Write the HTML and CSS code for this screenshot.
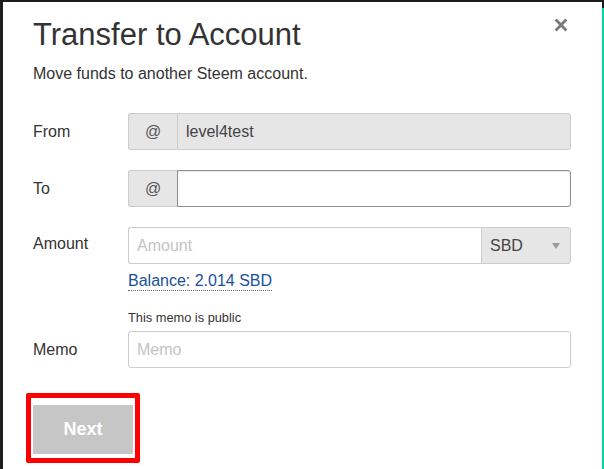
FILE: index.html
```html
<!DOCTYPE html>
<html lang="en">
<head>
<meta charset="utf-8">
<title>Transfer to Account</title>
<link rel="stylesheet" href="styles.css">
</head>
<body>
<div class="frame">
  <div class="modal">
    <button class="close" type="button" aria-label="Close">
      <svg width="14" height="14" viewBox="0 0 14 14"><path d="M1.6 1.6 L12.4 12.4 M12.4 1.6 L1.6 12.4" stroke="#7a7a7a" stroke-width="2.8" fill="none"/></svg>
    </button>
    <h1 class="title">Transfer to Account</h1>
    <p class="subtitle">Move funds to another Steem account.</p>
    <form class="form">
      <div class="row">
        <span class="label">From</span>
        <div class="field">
          <div class="group">
            <span class="addon">@</span>
            <input class="input input-disabled" value="level4test" disabled>
          </div>
        </div>
      </div>
      <div class="row">
        <span class="label">To</span>
        <div class="field">
          <div class="group">
            <span class="addon">@</span>
            <input class="input input-focus" value="">
          </div>
        </div>
      </div>
      <div class="row">
        <span class="label label-amount">Amount</span>
        <div class="field">
          <div class="group">
            <input class="input input-amount" placeholder="Amount">
            <div class="select">
              <span>SBD</span>
              <svg width="8" height="6" viewBox="0 0 8 6"><path d="M0 0 H8 L4 6 Z" fill="#999"/></svg>
            </div>
          </div>
          <a class="balance" href="#">Balance: 2.014 SBD</a>
        </div>
      </div>
      <div class="row row-memo">
        <span class="label label-memo">Memo</span>
        <div class="field">
          <span class="note">This memo is public</span>
          <input class="input input-memo" placeholder="Memo">
        </div>
      </div>
      <div class="actions">
        <div class="btn-wrap">
          <button class="btn" type="button">Next</button>
          <span class="highlight"></span>
        </div>
      </div>
    </form>
  </div>
  <div class="edge"></div>
</div>
</body>
</html>
```
FILE: styles.css
```css
html, body {
  margin: 0;
  height: 100%;
}
body {
  background: #1d1d1d;
  font-family: "Liberation Sans", Arial, sans-serif;
  color: #333;
  overflow: hidden;
}
.frame {
  display: flex;
  height: 469px;
  padding: 2px 0 0 3px;
  box-sizing: border-box;
}
.modal {
  position: relative;
  flex: 0 0 599px;
  background: #fff;
  padding: 16px 0 0 30px;
  box-sizing: border-box;
}
.edge {
  flex: 0 0 2px;
  margin-top: 6px;
  background: #06d6a9;
}
.close {
  position: absolute;
  top: 16px;
  right: 34px;
  width: 14px;
  height: 14px;
  padding: 0;
  border: 0;
  background: none;
  display: block;
}
.close svg {
  display: block;
}
.title {
  margin: 0;
  font-size: 31px;
  font-weight: normal;
  line-height: 34px;
  color: #333;
}
.subtitle {
  margin: 12px 0 0;
  font-size: 16px;
  line-height: 20px;
  color: #333;
}
.form {
  margin-top: 29px;
  display: flex;
  flex-direction: column;
  gap: 20px;
}
.row {
  display: grid;
  grid-template-columns: 95px 443px;
  align-items: start;
}
.label {
  height: 37px;
  line-height: 37px;
  font-size: 16px;
  color: #333;
}
.label-amount {
  margin-top: -2px;
}
.label-memo {
  align-self: end;
}
.field {
  display: flex;
  flex-direction: column;
  align-items: flex-start;
}
.group {
  display: flex;
  width: 100%;
  height: 37px;
}
.addon {
  flex: none;
  width: 48px;
  border: 1px solid #ccc;
  border-right: 0;
  border-radius: 3px 0 0 3px;
  background: #e6e6e6;
  display: flex;
  align-items: center;
  justify-content: center;
  font-size: 16px;
  color: #555;
}
.input {
  flex: 1;
  min-width: 0;
  height: 37px;
  box-sizing: border-box;
  margin: 0;
  border: 1px solid #ccc;
  border-radius: 0 3px 3px 0;
  padding: 0 8px;
  font-family: inherit;
  font-size: 16px;
  color: #444;
  background: #fff;
  outline: none;
}
.input::placeholder {
  color: #c4c4c4;
}
.input-disabled {
  background: #e6e6e6;
  color: #444;
  -webkit-text-fill-color: #444;
}
.input-focus {
  border-color: #8e8e8e;
  box-shadow: inset 0 1px 2px rgba(0, 0, 0, 0.1);
}
.input-amount {
  border-right: 0;
  border-radius: 3px 0 0 3px;
}
.select {
  flex: none;
  width: 90px;
  box-sizing: border-box;
  border: 1px solid #ccc;
  border-radius: 0 3px 3px 0;
  background: #e6e6e6;
  display: flex;
  align-items: center;
  justify-content: space-between;
  padding: 0 10px 0 8px;
  font-size: 16px;
  color: #444;
}
.select svg {
  display: block;
}
.balance {
  display: inline-block;
  margin-top: 8px;
  font-size: 16px;
  line-height: 18px;
  color: #1a5099;
  text-decoration: none;
  border-bottom: 1px dotted #666;
}
.note {
  font-size: 12.8px;
  line-height: 14px;
  margin-bottom: 6px;
  color: #333;
}
.input-memo {
  width: 100%;
  flex: none;
  border-radius: 3px;
}
.actions {
  margin-top: 17px;
}
.btn-wrap {
  position: relative;
  display: inline-block;
  vertical-align: top;
}
.btn {
  display: block;
  width: 100px;
  height: 49px;
  border: 0;
  border-radius: 0;
  background: #c6c6c6;
  color: #fff;
  font-family: inherit;
  font-size: 18px;
  font-weight: bold;
  padding: 0;
}
.highlight {
  position: absolute;
  left: -7px;
  top: -12px;
  width: 114px;
  height: 70px;
  border: 5px solid #ff0000;
  border-radius: 2px;
  box-sizing: border-box;
  pointer-events: none;
}
```
